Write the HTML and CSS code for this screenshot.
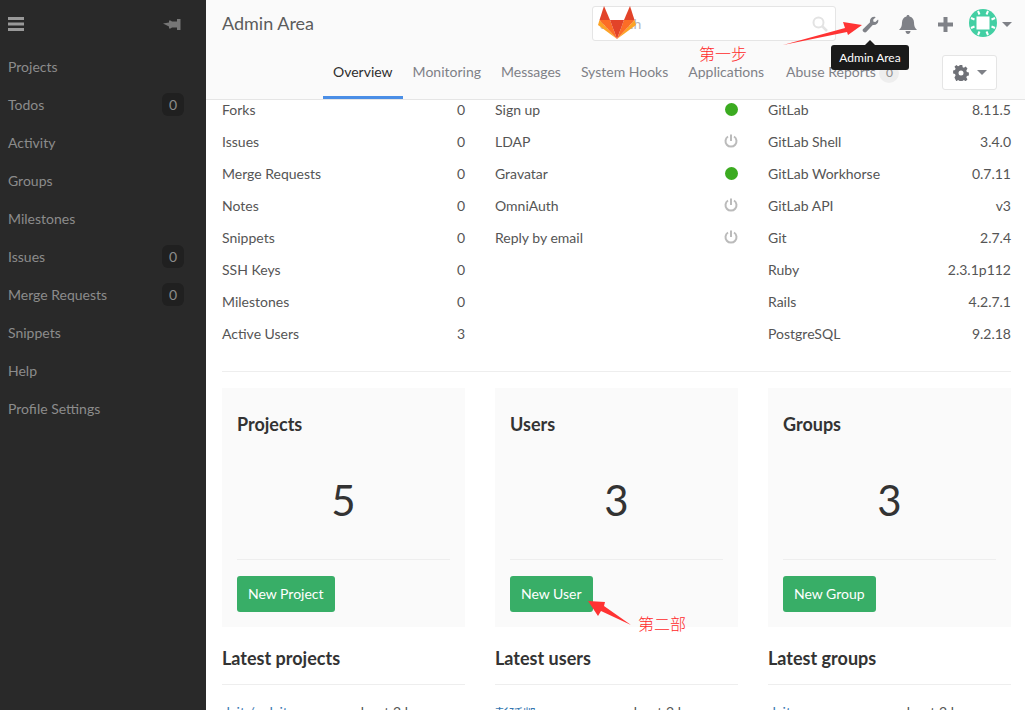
FILE: index.html
```html
<!DOCTYPE html>
<html lang="en">
<head>
  <meta charset="UTF-8">
  <meta name="viewport" content="width=device-width, initial-scale=1.0">
  <title>Admin Area</title>
  <link rel="stylesheet" href="styles.css">
</head>
<body>
  <aside class="sidebar">
    <div class="sidebar-top">
      <svg class="sidebar-icon" width="16" height="14" viewBox="0 0 16 14"><path d="M0 0h16v3H0zM0 5.500h16v3H0zM0 11h16v3H0z" fill="#999"/></svg>
      <svg class="sidebar-icon" width="18" height="14" viewBox="0 0 18 14"><path d="M0 6.500l6-1V3.500h1.500L9 4.500h5V2h3.500v11H14v-2.500H9l-1.500 1H6v-2z" fill="#777"/></svg>
    </div>
    <a class="side-link">Projects</a>
    <a class="side-link">Todos <span class="side-badge">0</span></a>
    <a class="side-link">Activity</a>
    <a class="side-link">Groups</a>
    <a class="side-link">Milestones</a>
    <a class="side-link">Issues <span class="side-badge">0</span></a>
    <a class="side-link">Merge Requests <span class="side-badge">0</span></a>
    <a class="side-link">Snippets</a>
    <a class="side-link">Help</a>
    <a class="side-link">Profile Settings</a>
  </aside>

  <div class="page">
    <header class="topbar">
      <div class="top-row">
        <h1 class="title">Admin Area</h1>
        <div class="search">
          <span>Search</span>
          <svg width="16" height="16" viewBox="0 0 16 16"><circle cx="6.500" cy="6.500" r="5" fill="none" stroke="#e3e3e3" stroke-width="2"/><path d="M10 10l5 5" stroke="#e3e3e3" stroke-width="2.500"/></svg>
        </div>
        <svg class="top-icon wrench" width="17" height="17" viewBox="0 0 18 18"><path d="M1 14L8.500 6.500C7.800 3.500 10 .5 13.500 .7l1 .500L11.800 4l.4 2 2 .4 2.800-2.700.3 1c.3 3.200-2.900 5.600-5.900 4.800L4.500 17c-1.700 1.500-5-1.300-3.500-3z" fill="#7f8187"/></svg>
        <svg class="top-icon bell" width="18" height="19" viewBox="0 0 18 19"><path d="M9 0c1 0 1.500.7 1.500 1.500C13.500 2.200 15 4.500 15 7.500c0 4 1 5.500 3 7.500H0c2-2 3-3.500 3-7.500 0-3 1.500-5.300 4.500-6C7.500.7 8 0 9 0zM6.500 16h5c0 1.500-1 3-2.500 3s-2.500-1.500-2.500-3z" fill="#7f8187"/></svg>
        <svg class="top-icon plus" width="15" height="15" viewBox="0 0 15 15"><path d="M5.500 0h4v5.500H15v4H9.500V15h-4V9.500H0v-4h5.500z" fill="#7f8187"/></svg>
        <svg class="avatar" width="28" height="28" viewBox="0 0 28 28">
          <circle cx="14" cy="14" r="14" fill="#42cfa3"/>
          <rect x="7.500" y="7.500" width="13" height="13" fill="#fff"/>
          <path d="M9 2l1.500 3.500M19 2l-1.500 3.500M2 9l3.500 1.500M2 19l3.500-1.500M26 9l-3.500 1.500M26 19l-3.500-1.500M9 26l1.500-3.500M19 26l-1.500-3.500" stroke="#fff" stroke-width="2"/>
        </svg>
        <span class="caret"></span>
      </div>
      <div class="nav-row">
        <nav class="tabs">
          <a class="tab tab-active">Overview</a>
          <a class="tab">Monitoring</a>
          <a class="tab">Messages</a>
          <a class="tab">System Hooks</a>
          <a class="tab">Applications</a>
          <a class="tab tab-last">Abuse Reports <span class="tab-badge">0</span></a>
        </nav>
        <button class="gear-btn">
          <svg width="16" height="16" viewBox="0 0 16 16"><path d="M6.500 0h3l.4 2.200 1.500.6L13.300 1.500l2.100 2.100-1.300 1.900.6 1.500 2.300.5v3l-2.300.4-.6 1.500 1.300 1.900-2.100 2.100-1.900-1.300-1.500.6-.4 2.200h-3l-.4-2.200-1.500-.6-1.900 1.300L.5 12.400l1.300-1.900-.6-1.500L-1 8.500v-3l2.200-.4.600-1.500L.5 1.700 2.700 0l1.900 1.300 1.500-.6z" transform="translate(1 0) scale(.875 1)" fill="#6f7177"/><circle cx="8" cy="8" r="2.500" fill="#fff"/></svg>
          <span class="caret"></span>
        </button>
      </div>
    </header>

    <main class="content">
      <section class="stats">
        <div class="stat-col">
          <div class="stat-row"><span>Forks</span><span>0</span></div>
          <div class="stat-row"><span>Issues</span><span>0</span></div>
          <div class="stat-row"><span>Merge Requests</span><span>0</span></div>
          <div class="stat-row"><span>Notes</span><span>0</span></div>
          <div class="stat-row"><span>Snippets</span><span>0</span></div>
          <div class="stat-row"><span>SSH Keys</span><span>0</span></div>
          <div class="stat-row"><span>Milestones</span><span>0</span></div>
          <div class="stat-row"><span>Active Users</span><span>3</span></div>
        </div>
        <div class="stat-col">
          <div class="stat-row"><span>Sign up</span><i class="dot"></i></div>
          <div class="stat-row"><span>LDAP</span><svg class="power" width="14" height="14" viewBox="0 0 14 14"><path d="M4 2.500a5.500 5.500 0 1 0 6 0M7 .5v6.500" fill="none" stroke="#bbb" stroke-width="2"/></svg></div>
          <div class="stat-row"><span>Gravatar</span><i class="dot"></i></div>
          <div class="stat-row"><span>OmniAuth</span><svg class="power" width="14" height="14" viewBox="0 0 14 14"><path d="M4 2.500a5.500 5.500 0 1 0 6 0M7 .5v6.500" fill="none" stroke="#bbb" stroke-width="2"/></svg></div>
          <div class="stat-row"><span>Reply by email</span><svg class="power" width="14" height="14" viewBox="0 0 14 14"><path d="M4 2.500a5.500 5.500 0 1 0 6 0M7 .5v6.500" fill="none" stroke="#bbb" stroke-width="2"/></svg></div>
        </div>
        <div class="stat-col">
          <div class="stat-row"><span>GitLab</span><span>8.11.5</span></div>
          <div class="stat-row"><span>GitLab Shell</span><span>3.4.0</span></div>
          <div class="stat-row"><span>GitLab Workhorse</span><span>0.7.11</span></div>
          <div class="stat-row"><span>GitLab API</span><span>v3</span></div>
          <div class="stat-row"><span>Git</span><span>2.7.4</span></div>
          <div class="stat-row"><span>Ruby</span><span>2.3.1p112</span></div>
          <div class="stat-row"><span>Rails</span><span>4.2.7.1</span></div>
          <div class="stat-row"><span>PostgreSQL</span><span>9.2.18</span></div>
        </div>
      </section>

      <hr class="divider">

      <section class="cards">
        <div class="card">
          <h3>Projects</h3>
          <div class="card-count">5</div>
          <hr>
          <a class="btn-new">New Project</a>
        </div>
        <div class="card">
          <h3>Users</h3>
          <div class="card-count">3</div>
          <hr>
          <a class="btn-new">New User</a>
        </div>
        <div class="card">
          <h3>Groups</h3>
          <div class="card-count">3</div>
          <hr>
          <a class="btn-new">New Group</a>
        </div>
      </section>

      <section class="latest">
        <div>
          <h4>Latest projects</h4>
          <div class="latest-row"><a>dcit / cdcit</a><span>about 2 hours ago</span></div>
        </div>
        <div>
          <h4>Latest users</h4>
          <div class="latest-row"><a>彭延凯</a><span>about 2 hours ago</span></div>
        </div>
        <div>
          <h4>Latest groups</h4>
          <div class="latest-row"><a>dcit</a><span>about 2 hours ago</span></div>
        </div>
      </section>
    </main>
  </div>

  <!-- stuff pasted on top of the screenshot -->
  <svg class="logo" width="38" height="36" viewBox="0 0 38 36">
    <path d="M6 1l6 14H1.500z" fill="#e24329"/>
    <path d="M32 1l-6 14h10.500z" fill="#e24329"/>
    <path d="M1.500 15L0 20l19 14z" fill="#fca326"/>
    <path d="M36.500 15l1.500 5-19 14z" fill="#fca326"/>
    <path d="M1.500 15H12l7 19z" fill="#fc6d26"/>
    <path d="M36.500 15H26l-7 19z" fill="#fc6d26"/>
    <path d="M12 15h14l-7 19z" fill="#e24329"/>
  </svg>
  <div class="tooltip">Admin Area</div>
  <svg class="arrows" width="1025" height="710" viewBox="0 0 1025 710">
    <path d="M783 45L845 28 843 22 862 25 848 35 847 32z" fill="#ff3333"/>
    <path d="M588 601L605 602 604 606 631 625 601 611 598 616z" fill="#ff3333"/>
  </svg>
  <span class="note note-one">第一步</span>
  <span class="note note-two">第二部</span>
</body>
</html>
```

FILE: styles.css
```css
* {
  box-sizing: border-box;
}
html, body {
  height: 100%;
}
body {
  margin: 0;
  display: flex;
  height: 710px;
  overflow: hidden;
  position: relative;
  font-family: "Lato", "Noto Sans CJK SC", sans-serif;
  font-size: 14px;
  color: #555;
  background-color: #fff;
}
.sidebar {
  width: 206px;
  flex-shrink: 0;
  background-color: #292929;
}
.sidebar-top {
  height: 48px;
  display: flex;
  align-items: center;
  justify-content: space-between;
  padding: 0 25px 0 8px;
}
.side-link {
  height: 38px;
  display: flex;
  align-items: center;
  justify-content: space-between;
  padding: 0 22px 2px 8px;
  color: #8c8c8c;
}
.side-badge {
  min-width: 22px;
  height: 23px;
  line-height: 23px;
  text-align: center;
  border-radius: 6px;
  background-color: #202020;
  color: #8c8c8c;
}
.page {
  flex: 1;
  min-width: 0;
  display: flex;
  flex-direction: column;
  height: 710px;
}
.topbar {
  height: 100px;
  flex-shrink: 0;
  position: relative;
  z-index: 1;
  background-color: #fafafa;
  border-bottom: 1px solid #e5e5e5;
}
.top-row {
  height: 48px;
  display: flex;
  align-items: center;
  padding-left: 16px;
}
.title {
  margin: -2px 0 0;
  font-size: 18px;
  font-weight: 400;
  color: #5c5c5c;
}
.search {
  width: 244px;
  height: 35px;
  margin-left: auto;
  margin-top: -1px;
  padding: 0 7px 0 7px;
  display: flex;
  align-items: center;
  justify-content: space-between;
  background-color: #fff;
  border: 1px solid #e5e5e5;
  border-radius: 3px;
  color: #b5b5c0;
}
.top-icon {
  flex-shrink: 0;
}
.wrench {
  margin-left: 26px;
}
.bell {
  margin-left: 20px;
}
.plus {
  margin-left: 21px;
}
.avatar {
  margin-left: 16px;
  margin-top: -2px;
}
.caret {
  display: inline-block;
  border-left: 5px solid transparent;
  border-right: 5px solid transparent;
  border-top: 5px solid #7f8187;
}
.top-row .caret {
  margin-left: 5px;
  margin-right: 13px;
}
.nav-row {
  display: flex;
  align-items: flex-start;
  padding-left: 117px;
  padding-right: 28px;
}
.tabs {
  display: flex;
  height: 51px;
}
.tab {
  height: 51px;
  padding: 0 10px;
  line-height: 48px;
  color: #7f8187;
  white-space: nowrap;
}
.tab-active {
  color: #2e2e2e;
  border-bottom: 3px solid #4a8ee6;
}
.tab-last {
  margin-left: 2px;
}
.tab-badge {
  display: inline-block;
  width: 20px;
  height: 20px;
  line-height: 20px;
  text-align: center;
  border-radius: 50%;
  background-color: #eee;
  font-size: 12px;
  color: #8c8c8c;
}
.gear-btn {
  width: 55px;
  height: 35px;
  margin-left: auto;
  margin-top: 7px;
  padding: 0;
  display: flex;
  align-items: center;
  justify-content: center;
  gap: 8px;
  background-color: #fff;
  border: 1px solid #e5e5e5;
  border-radius: 3px;
}
.content {
  flex: 1;
  overflow: hidden;
  padding: 0 14px 0 16px;
}
.stats {
  display: grid;
  grid-template-columns: repeat(3, 243px);
  gap: 30px;
  margin-top: -7px;
}
.stat-row {
  height: 32px;
  display: flex;
  align-items: center;
  justify-content: space-between;
}
.dot {
  width: 13px;
  height: 13px;
  border-radius: 50%;
  background-color: #3bab20;
}
.divider {
  margin: 22px 0 16px;
  border: 0;
  border-top: 1px solid #eee;
}
.cards {
  display: grid;
  grid-template-columns: repeat(3, 243px);
  gap: 30px;
}
.card {
  height: 239px;
  padding: 15px;
  background-color: #fafafa;
}
.card h3 {
  margin: 9px 0 0;
  font-size: 18px;
  line-height: 24px;
  font-weight: 700;
  color: #333;
}
.card-count {
  margin-top: 39px;
  text-align: center;
  font-size: 42px;
  line-height: 50px;
  color: #333;
}
.card hr {
  margin: 34px 0 16px;
  border: 0;
  border-top: 1px solid #eee;
}
.btn-new {
  display: inline-block;
  height: 36px;
  line-height: 36px;
  padding: 0 11px;
  border-radius: 3px;
  background-color: #38ae67;
  color: #fff;
}
.latest {
  display: grid;
  grid-template-columns: repeat(3, 243px);
  gap: 30px;
}
.latest h4 {
  margin: 0;
  height: 58px;
  padding-top: 19px;
  font-size: 18px;
  line-height: 24px;
  font-weight: 700;
  color: #333;
  border-bottom: 1px solid #eee;
}
.latest-row {
  display: flex;
  justify-content: space-between;
  margin-top: 18px;
}
.latest-row a {
  color: #3777b0;
}
.logo {
  position: absolute;
  left: 598px;
  top: 5px;
  z-index: 2;
}
.tooltip {
  position: absolute;
  left: 831px;
  top: 45px;
  z-index: 2;
  width: 78px;
  height: 25px;
  line-height: 25px;
  text-align: center;
  font-size: 12px;
  color: #fff;
  background-color: #1a1a1a;
  border-radius: 3px;
}
.tooltip::before {
  content: "";
  position: absolute;
  left: 34px;
  top: -5px;
  border-left: 5px solid transparent;
  border-right: 5px solid transparent;
  border-bottom: 5px solid #1a1a1a;
}
.arrows {
  position: absolute;
  left: 0;
  top: 0;
  z-index: 3;
  pointer-events: none;
}
.note {
  position: absolute;
  z-index: 3;
  font-family: "Noto Sans CJK SC", sans-serif;
  font-size: 16px;
  line-height: 20px;
  font-weight: 300;
  color: #ff2a2a;
}
.note-one {
  left: 699px;
  top: 43px;
}
.note-two {
  left: 638px;
  top: 613px;
}
```
